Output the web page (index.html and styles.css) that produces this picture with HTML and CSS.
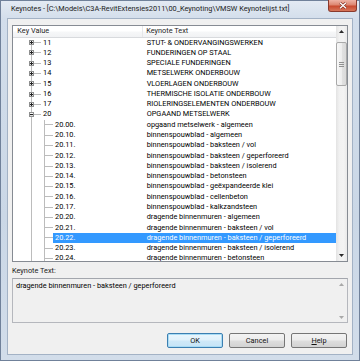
FILE: index.html
```html
<!DOCTYPE html>
<html>
<head>
<meta charset="utf-8">
<link rel="stylesheet" href="styles.css">
</head>
<body>
<div class="window">
  <div class="titlebar">
    <div class="title">Keynotes - [C:\Models\C3A-RevitExtensies2011\00_Keynoting\VMSW Keynotelijst.txt]</div>
    <div class="close"><svg width="10" height="7" viewBox="0 0 10 7"><path d="M2 0.8 L8 6.2 M8 0.8 L2 6.2" stroke="#7d2a1c" stroke-width="2.6" fill="none"/><path d="M2 0.8 L8 6.2 M8 0.8 L2 6.2" stroke="#ffffff" stroke-width="1.4" fill="none"/></svg></div>
  </div>
  <div class="client">
    <div class="listbox">
      <div class="tree">
        <div class="header">
          <div class="hcell hkey">Key Value</div>
          <div class="hcell htxt">Keynote Text</div>
        </div>
        <div class="row"><span class="gutter top first"><span class="exp plus"></span></span><span class="cells"><span class="key k1">11</span><span class="txt">STUT- &amp; ONDERVANGINGSWERKEN</span></span></div>
        <div class="row"><span class="gutter top"><span class="exp plus"></span></span><span class="cells"><span class="key k1">12</span><span class="txt">FUNDERINGEN OP STAAL</span></span></div>
        <div class="row"><span class="gutter top"><span class="exp plus"></span></span><span class="cells"><span class="key k1">13</span><span class="txt">SPECIALE FUNDERINGEN</span></span></div>
        <div class="row"><span class="gutter top"><span class="exp plus"></span></span><span class="cells"><span class="key k1">14</span><span class="txt">METSELWERK ONDERBOUW</span></span></div>
        <div class="row"><span class="gutter top"><span class="exp plus"></span></span><span class="cells"><span class="key k1">15</span><span class="txt">VLOERLAGEN ONDERBOUW</span></span></div>
        <div class="row"><span class="gutter top"><span class="exp plus"></span></span><span class="cells"><span class="key k1">16</span><span class="txt">THERMISCHE ISOLATIE ONDERBOUW</span></span></div>
        <div class="row"><span class="gutter top"><span class="exp plus"></span></span><span class="cells"><span class="key k1">17</span><span class="txt">RIOLERINGSELEMENTEN ONDERBOUW</span></span></div>
        <div class="row"><span class="gutter top"><span class="exp minus"></span></span><span class="cells"><span class="key k1">20</span><span class="txt">OPGAAND METSELWERK</span></span></div>
        <div class="row"><span class="gutter child"></span><span class="cells"><span class="key k2">20.00.</span><span class="txt">opgaand metselwerk - algemeen</span></span></div>
        <div class="row"><span class="gutter child"></span><span class="cells"><span class="key k2">20.10.</span><span class="txt">binnenspouwblad - algemeen</span></span></div>
        <div class="row"><span class="gutter child"></span><span class="cells"><span class="key k2">20.11.</span><span class="txt">binnenspouwblad - baksteen / vol</span></span></div>
        <div class="row"><span class="gutter child"></span><span class="cells"><span class="key k2">20.12.</span><span class="txt">binnenspouwblad - baksteen / geperforeerd</span></span></div>
        <div class="row"><span class="gutter child"></span><span class="cells"><span class="key k2">20.13.</span><span class="txt">binnenspouwblad - baksteen / isolerend</span></span></div>
        <div class="row"><span class="gutter child"></span><span class="cells"><span class="key k2">20.14.</span><span class="txt">binnenspouwblad - betonsteen</span></span></div>
        <div class="row"><span class="gutter child"></span><span class="cells"><span class="key k2">20.15.</span><span class="txt">binnenspouwblad - geëxpandeerde klei</span></span></div>
        <div class="row"><span class="gutter child"></span><span class="cells"><span class="key k2">20.16.</span><span class="txt">binnenspouwblad - cellenbeton</span></span></div>
        <div class="row"><span class="gutter child"></span><span class="cells"><span class="key k2">20.17.</span><span class="txt">binnenspouwblad - kalkzandsteen</span></span></div>
        <div class="row"><span class="gutter child"></span><span class="cells"><span class="key k2">20.20.</span><span class="txt">dragende binnenmuren - algemeen</span></span></div>
        <div class="row"><span class="gutter child"></span><span class="cells"><span class="key k2">20.21.</span><span class="txt">dragende binnenmuren - baksteen / vol</span></span></div>
        <div class="row"><span class="gutter child"></span><span class="cells selected"><span class="key k2">20.22.</span><span class="txt">dragende binnenmuren - baksteen / geperforeerd</span></span></div>
        <div class="row"><span class="gutter child"></span><span class="cells"><span class="key k2">20.23.</span><span class="txt">dragende binnenmuren - baksteen / isolerend</span></span></div>
        <div class="row"><span class="gutter child"></span><span class="cells"><span class="key k2">20.24.</span><span class="txt">dragende binnenmuren - betonsteen</span></span></div>
      </div>
      <div class="vscroll">
        <div class="arrow"><svg width="5" height="3" viewBox="0 0 5 3"><path d="M0 3 L2.5 0 L5 3 Z" fill="#2a2a2a"/></svg></div>
        <div class="track">
          <div class="thumb"><span class="grip"></span></div>
        </div>
        <div class="arrow"><svg width="5" height="3" viewBox="0 0 5 3"><path d="M0 0 L5 0 L2.5 3 Z" fill="#2a2a2a"/></svg></div>
      </div>
    </div>
    <div class="label">Keynote Text:</div>
    <div class="textbox">
      <div class="textcontent">dragende binnenmuren - baksteen / geperforeerd</div>
      <div class="vscroll disabled">
        <div class="arrow"><svg width="5" height="3" viewBox="0 0 5 3"><path d="M0 3 L2.5 0 L5 3 Z" fill="#a8a8a8"/></svg></div>
        <div class="track"></div>
        <div class="arrow"><svg width="5" height="3" viewBox="0 0 5 3"><path d="M0 0 L5 0 L2.5 3 Z" fill="#a8a8a8"/></svg></div>
      </div>
    </div>
    <div class="buttons">
      <div class="btn default">OK</div>
      <div class="btn">Cancel</div>
      <div class="btn"><span><u>H</u>elp</span></div>
    </div>
  </div>
</div>
</body>
</html>
```

FILE: styles.css
```css
html, body {
  margin: 0;
  padding: 0;
}
body {
  width: 360px;
  height: 361px;
  overflow: hidden;
  font-family: Roboto, "Liberation Sans", Arial, sans-serif;
  font-size: 7.35px;
  color: #000;
}
.window {
  box-sizing: border-box;
  width: 360px;
  height: 361px;
  border: 1px solid #70819a;
  background: linear-gradient(#e3eaf3, #d3deeb 18px, #cad7e6 60%, #d2ddea);
  display: flex;
  flex-direction: column;
  padding: 0 6px 5px 6px;
}
.titlebar {
  flex: none;
  height: 17px;
  display: flex;
  align-items: flex-start;
}
.title {
  padding-left: 4px;
  line-height: 16px;
  white-space: nowrap;
  color: #1b1b1b;
}
.close {
  margin-left: auto;
  margin-top: -1px;
  margin-right: -4px;
  width: 29px;
  height: 12px;
  box-sizing: border-box;
  border: 1px solid #8a3a2c;
  border-top: none;
  border-radius: 0 0 3px 3px;
  background: linear-gradient(#eeb3a5, #dd8670 45%, #c94a2f 55%, #d7765a);
  display: flex;
  align-items: center;
  justify-content: center;
}
.close svg { display: block; }
.client {
  flex: 1;
  border: 1px solid #a3b2c5;
  background: #f0f0f0;
  display: flex;
  flex-direction: column;
  padding: 6px 4px 6.5px 4px;
}
.listbox {
  flex: none;
  height: 237px;
  box-sizing: border-box;
  border: 1px solid #868b93;
  background: #fff;
  display: flex;
}
.tree {
  flex: 1;
  display: flex;
  flex-direction: column;
  overflow: hidden;
  min-width: 0;
}
.header {
  flex: none;
  height: 11.5px;
  box-sizing: border-box;
  display: flex;
  border-bottom: 1px solid #d8dadd;
  background: linear-gradient(#ffffff, #ffffff 45%, #f6f7f8 55%, #f1f2f4);
  color: #1e1e1e;
}
.hcell {
  line-height: 10.5px;
  white-space: nowrap;
}
.hkey {
  width: 130px;
  box-sizing: border-box;
  padding-left: 4.3px;
  border-right: 1px solid #e6e7e9;
}
.htxt {
  flex: 1;
  padding-left: 3.2px;
}
.row {
  flex: none;
  height: 10.29px;
  line-height: 10.29px;
  display: flex;
  white-space: nowrap;
}
.gutter {
  flex: none;
  display: flex;
  align-items: center;
  box-sizing: border-box;
}
.gutter.top {
  width: 28px;
  padding-left: 16px;
  background:
    linear-gradient(#bcbcbc, #bcbcbc) 18px 0 / 1px 100% no-repeat,
    linear-gradient(#bcbcbc, #bcbcbc) 21px 50% / 7px 1px no-repeat;
}
.gutter.top.first {
  background:
    linear-gradient(#bcbcbc, #bcbcbc) 18px 100% / 1px 50% no-repeat,
    linear-gradient(#bcbcbc, #bcbcbc) 21px 50% / 7px 1px no-repeat;
}
.gutter.child {
  width: 40px;
  background:
    linear-gradient(#bcbcbc, #bcbcbc) 18px 0 / 1px 100% no-repeat,
    linear-gradient(#bcbcbc, #bcbcbc) 31px 0 / 1px 100% no-repeat,
    linear-gradient(#bcbcbc, #bcbcbc) 31px 50% / 9px 1px no-repeat;
}
.exp {
  width: 5px;
  height: 5px;
  box-sizing: border-box;
  border: 1px solid #8e8f8f;
  background-color: #f4f4f4;
}
.exp.plus {
  background:
    linear-gradient(#1f1f1f, #1f1f1f) 50% 50% / 3px 1px no-repeat,
    linear-gradient(#1f1f1f, #1f1f1f) 50% 50% / 1px 3px no-repeat,
    linear-gradient(#ffffff, #d6d6d6);
}
.exp.minus {
  background:
    linear-gradient(#1f1f1f, #1f1f1f) 50% 50% / 3px 1px no-repeat,
    linear-gradient(#ffffff, #d6d6d6);
}
.cells {
  flex: 1;
  display: flex;
  min-width: 0;
}
.cells.selected {
  background: #3399ff;
  color: #fff;
}
.key {
  flex: none;
  box-sizing: border-box;
  padding-left: 2px;
}
.k1 { width: 102px; }
.k2 { width: 90px; }
.txt {
  flex: 1;
  padding-left: 3.7px;
  overflow: hidden;
}
.vscroll {
  flex: none;
  width: 11px;
  display: flex;
  flex-direction: column;
  background: linear-gradient(90deg, #e3e3e3, #f1f1f1 30%, #f3f3f3 70%, #e9e9e9);
}
.vscroll .arrow {
  flex: none;
  height: 11px;
  display: flex;
  align-items: center;
  justify-content: center;
}
.vscroll .arrow svg { display: block; }
.vscroll .track {
  flex: 1;
}
.thumb {
  margin-top: 5px;
  height: 44px;
  box-sizing: border-box;
  border: 1px solid #a9a9a9;
  border-radius: 2px;
  background: linear-gradient(90deg, #f8f8f8, #eeeeee 50%, #e2e2e2 50%, #dadada);
  display: flex;
  align-items: center;
  justify-content: center;
}
.grip {
  width: 5px;
  height: 5px;
  background: repeating-linear-gradient(#909090 0, #909090 1px, transparent 1px, transparent 2px);
}
.vscroll.disabled {
  background: transparent;
}
.vscroll.disabled .arrow {
  height: 10px;
}
.label {
  flex: none;
  margin-top: 4px;
  margin-bottom: 2px;
  height: 10px;
  line-height: 10px;
  color: #1a1a1a;
}
.textbox {
  flex: none;
  height: 45px;
  box-sizing: border-box;
  border: 1px solid #b5b7bd;
  border-top-color: #a3a6ad;
  background: #f0f0f0;
  display: flex;
}
.textcontent {
  flex: 1;
  padding: 2px 0 0 3px;
  line-height: 10px;
  white-space: nowrap;
}
.buttons {
  flex: none;
  margin-top: 10px;
  display: flex;
  justify-content: flex-end;
  gap: 6px;
  padding-right: 1px;
}
.btn {
  width: 56px;
  height: 14.5px;
  box-sizing: border-box;
  border: 1px solid #767676;
  border-radius: 2px;
  background: linear-gradient(#f3f3f3, #ececec 48%, #dedede 52%, #d2d2d2);
  display: flex;
  align-items: center;
  justify-content: center;
  color: #111;
}
.btn.default {
  border-color: #3c7fb1;
  box-shadow: inset 0 0 0 1px #a9dcf5;
  background: linear-gradient(#eaf6fd, #e0f1fb 48%, #cfe9f8 52%, #c6e4f7);
}
.btn u { text-decoration: underline; }
```
